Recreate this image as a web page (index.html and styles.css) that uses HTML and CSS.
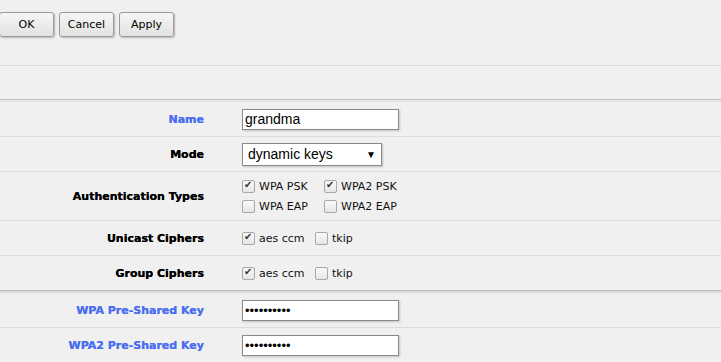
FILE: index.html
```html
<!DOCTYPE html>
<html lang="en">
<head>
  <meta charset="UTF-8" />
  <title>Security Profile</title>
  <link rel="stylesheet" href="styles.css">
</head>
<body>
  <div class="toolbar">
    <button class="btn">OK</button>
    <button class="btn">Cancel</button>
    <button class="btn">Apply</button>
  </div>

  <div class="spacer"></div>

  <div class="form">
    <div class="row">
      <div class="label link">Name</div>
      <div class="field"><input class="text" type="text" value="grandma"></div>
    </div>
    <div class="row">
      <div class="label">Mode</div>
      <div class="field">
        <div class="select">dynamic keys<span class="arrow">&#9660;</span></div>
      </div>
    </div>
    <div class="row tall">
      <div class="label">Authentication Types</div>
      <div class="field">
        <div class="checks grid2">
          <label class="chk"><span class="box on"></span>WPA PSK</label>
          <label class="chk"><span class="box on"></span>WPA2 PSK</label>
          <label class="chk"><span class="box"></span>WPA EAP</label>
          <label class="chk"><span class="box"></span>WPA2 EAP</label>
        </div>
      </div>
    </div>
    <div class="row">
      <div class="label">Unicast Ciphers</div>
      <div class="field">
        <div class="checks">
          <label class="chk"><span class="box on"></span>aes ccm</label>
          <label class="chk"><span class="box"></span>tkip</label>
        </div>
      </div>
    </div>
    <div class="row double">
      <div class="label">Group Ciphers</div>
      <div class="field">
        <div class="checks">
          <label class="chk"><span class="box on"></span>aes ccm</label>
          <label class="chk"><span class="box"></span>tkip</label>
        </div>
      </div>
    </div>
    <div class="row">
      <div class="label link">WPA Pre-Shared Key</div>
      <div class="field"><input class="text pw" type="password" value="0123456789"></div>
    </div>
    <div class="row">
      <div class="label link">WPA2 Pre-Shared Key</div>
      <div class="field"><input class="text pw" type="password" value="0123456789"></div>
    </div>
  </div>
</body>
</html>
```

FILE: styles.css
```css
body {
  margin: 0;
  background-color: #f0f0f0;
  font-family: "DejaVu Sans", Verdana, sans-serif;
  font-size: 11px;
  color: #000;
}

.toolbar {
  height: 53px;
  padding-top: 12px;
  margin-left: -1px;
  display: flex;
  gap: 5px;
  align-items: flex-start;
  border-bottom: 1px solid #dcdcdc;
}

.btn {
  width: 55px;
  height: 25px;
  padding: 0;
  font-family: "DejaVu Sans", Verdana, sans-serif;
  font-size: 11px;
  color: #000;
  background: linear-gradient(#f6f6f6, #e2e2e2);
  border: 1px solid #9a9a9a;
  border-radius: 3px;
  box-shadow: 1px 1px 2px rgba(0, 0, 0, 0.25);
}

.spacer {
  height: 33px;
  border-bottom: 1px solid #bdbdbd;
}

.form {
  border-top: 1px solid #dcdcdc;
  margin-top: 1px;
}

.row {
  display: flex;
  align-items: center;
  min-height: 34px;
  border-bottom: 1px solid #dcdcdc;
}

.row.tall {
  min-height: 48px;
}

.row.double {
  border-bottom: 1px solid #bdbdbd;
  box-shadow: 0 2px 0 #dcdcdc;
  margin-bottom: 2px;
}

.label {
  width: 204px;
  text-align: right;
  font-weight: bold;
  flex: none;
  text-shadow: 0 0 0.4px currentColor;
}

.label.link {
  color: #4a6ff2;
}

.field {
  margin-left: 38px;
  display: flex;
  align-items: center;
}

.text {
  width: 157px;
  height: 21px;
  box-sizing: border-box;
  margin: 0;
  padding: 1px 2px;
  border: 1px solid #8a8a8a;
  background: #fff;
  font-family: "Liberation Sans", Arial, sans-serif;
  font-size: 14px;
  color: #000;
  box-shadow: 1px 1px 2px rgba(0, 0, 0, 0.2);
  outline: none;
}

.text.pw {
  font-size: 13px;
  letter-spacing: 0;
}

.select {
  width: 140px;
  height: 23px;
  box-sizing: border-box;
  padding: 3px 5px;
  border: 1px solid #8a8a8a;
  background: #fff;
  font-family: "Liberation Sans", Arial, sans-serif;
  font-size: 14px;
  box-shadow: 1px 1px 2px rgba(0, 0, 0, 0.2);
  display: flex;
  justify-content: space-between;
  align-items: center;
}

.arrow {
  font-size: 10px;
}

.checks {
  display: flex;
  gap: 9px;
}

.checks.grid2 {
  display: grid;
  grid-template-columns: 73px auto;
  row-gap: 7px;
  column-gap: 9px;
}

.chk {
  display: flex;
  align-items: center;
  gap: 4px;
  font-size: 11px;
  color: #111;
}

.chk:first-child {
  min-width: 64px;
}

.box {
  width: 11px;
  height: 11px;
  border: 1px solid #a8a8a8;
  border-radius: 2px;
  background: linear-gradient(#fafafa, #e6e6e6);
  position: relative;
}

.box.on::after {
  content: "\2714";
  position: absolute;
  left: 1px;
  top: -2px;
  font-size: 10px;
  font-weight: bold;
  color: #333;
}
```
